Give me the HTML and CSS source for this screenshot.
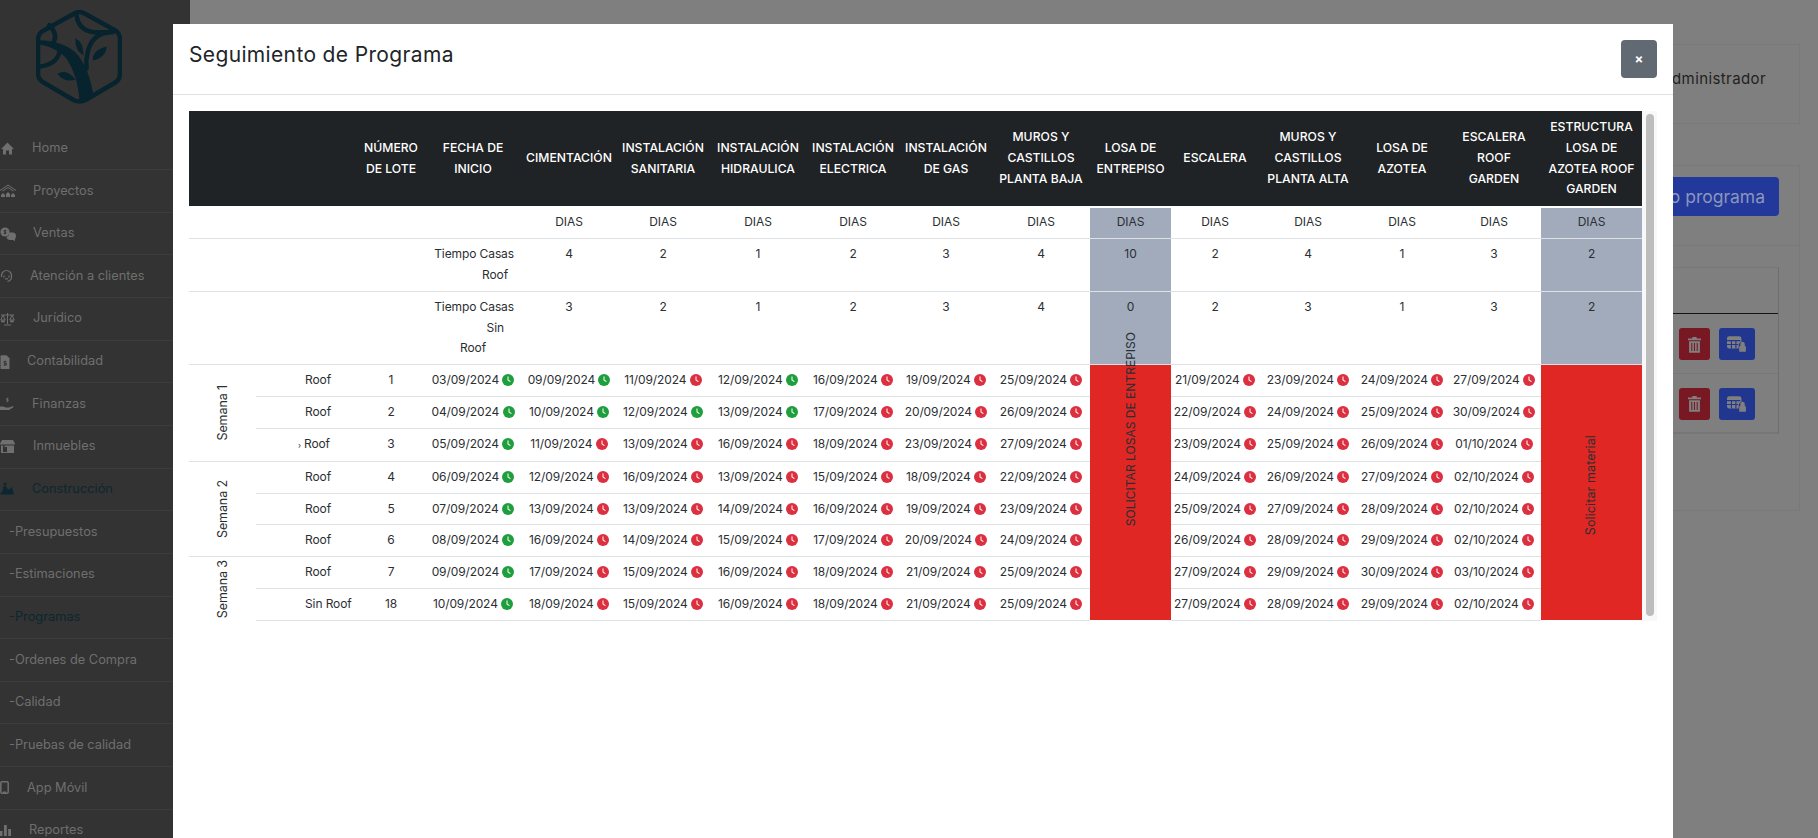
FILE: index.html
```html
<!DOCTYPE html>
<html lang="es">
<head>
  <meta charset="UTF-8">
  <title>Seguimiento de Programa</title>
  <link rel="stylesheet" href="styles.css">
</head>
<body>
  <svg class="sprite" width="0" height="0">
    <symbol id="clock" viewBox="0 0 12 12">
      <circle cx="6" cy="6" r="6" fill="currentColor"/>
      <path d="M5.5 2.5h1v3.2l2.2 1.500-.6.8-2.600-1.800z" fill="#fff"/>
    </symbol>
  </svg>

  <div class="layout">
    <aside class="sidebar">
      <div class="brand">
        <svg class="logo" viewBox="0 0 85 93" fill="none" stroke="#07232d" stroke-width="4.4" stroke-linecap="round">
          <path d="M37 4Q43 0 49 4L78 20Q83 23 83 29V63Q83 69 78 72L49 89Q43 92 37 89L8 72Q2 69 2 63V29Q2 23 8 20Z"/>
          <path d="M40 4Q41 20 58 22H76"/>
          <path d="M72 22Q55 24 51 42Q49 50 50 58"/>
          <path d="M13 15Q23 25 16 34"/>
          <path d="M23 42Q20 54 3 56"/>
          <path d="M43 90C42 74 38 60 30 48C24 41 14 36 3 34V30C16 30 30 34 39 42C49 52 54 68 57 85Z" fill="#07232d" stroke="none"/>
          <path d="M39 28Q47 32 47 45Q38 40 39 28Z" fill="#07232d" stroke="none"/>
          <path d="M70 36Q69 47 56 50Q56 39 70 36Z" fill="#07232d" stroke="none"/>
          <path d="M21 63Q31 58 39 69Q28 72 21 63Z" fill="#07232d" stroke="none"/>
        </svg>
      </div>
      <nav class="nav">
        <a class="nav-item">
          <span class="nav-icon"><svg width="15" height="15" viewBox="0 0 15 15"><path d="M7.5 1.5 14 8h-2v5.5H9V9.500H6v4H3V8H1z" fill="currentColor"/></svg></span>Home
        </a>
        <a class="nav-item">
          <span class="nav-icon wide"><svg width="16" height="14" viewBox="0 0 16 14"><path d="M0 6.500 8 1l8 5.500M2.500 7 8 3.500 13.500 7" fill="none" stroke="currentColor"/><path d="M1 13v-2l2-2 2 2v2zM6 13v-3l2-2 2 2v3zM11 13v-2l2-2 2 2v2z" fill="currentColor"/></svg></span>Proyectos
        </a>
        <a class="nav-item">
          <span class="nav-icon wide"><svg width="16" height="14" viewBox="0 0 16 14"><circle cx="5" cy="5" r="4.600" fill="currentColor"/><path d="M9 5.500h3.500q3.500 0 3.500 3.500 0 2-1 3v2l-2-1H10Q7 13 6.500 10 9.500 9 9 5.500z" fill="currentColor"/><path d="M6.500 3.500H4.200v1.500h1.600v1.500H3.500M5 2.500v5" fill="none" stroke="#333" stroke-width=".8"/></svg></span>Ventas
        </a>
        <a class="nav-item">
          <span class="nav-icon narrow"><svg width="13" height="14" viewBox="0 0 13 14" fill="none" stroke="currentColor" stroke-width="1.200"><path d="M1.500 8V6.500a5 5 0 0 1 10 0V8q0 3.500-4 4.500"/><path d="M4 6.500v2M9 6.500v2M5 9.500q1.500 1 3 0"/></svg></span>Atención a clientes
        </a>
        <a class="nav-item">
          <span class="nav-icon wide"><svg width="15" height="14" viewBox="0 0 15 14" fill="none" stroke="currentColor"><path d="M7.500 1v11M4 13h7M1 3h13M3 3 .8 8h4.400zM12 3 9.800 8h4.400z"/><path d="M.8 8.500a2.200 2 0 0 0 4.400 0zM9.800 8.500a2.200 2 0 0 0 4.400 0z" fill="currentColor" stroke="none"/></svg></span>Jurídico
        </a>
        <a class="nav-item">
          <span class="nav-icon small"><svg width="10" height="14" viewBox="0 0 10 14"><path d="M0 1q0-1 1-1h5l3 3v10q0 1-1 1H1q-1 0-1-1z" fill="currentColor" transform="translate(.5 .200)"/><path d="M6.500 6.500H4v1.800h2.500V10H3.500M5 5.500v5.500" fill="none" stroke="#333" stroke-width=".8"/></svg></span>Contabilidad
        </a>
        <a class="nav-item">
          <span class="nav-icon"><svg width="14" height="14" viewBox="0 0 14 14"><path d="M0 9.500h3l3 1h3l4-1.500q1 .5 0 1.500l-4 2.500H0z" fill="currentColor"/><path d="M8.500 1.500H6.800v1.300h1.400v1.400H6.300M7.300 .6v4.600" fill="none" stroke="currentColor" stroke-width=".8"/></svg></span>Finanzas
        </a>
        <a class="nav-item">
          <span class="nav-icon wide"><svg width="15" height="14" viewBox="0 0 15 14"><path d="M2 0h11l2 3.500v1H0v-1z" fill="currentColor"/><path d="M1 5.500h2V12h4V7h-2.500V5.500H14V13H1zM9.500 7H12v5H9.500z" fill="currentColor"/></svg></span>Inmuebles
        </a>
        <a class="nav-item active">
          <span class="nav-icon"><svg width="14" height="14" viewBox="0 0 14 14"><circle cx="5" cy="2" r="1.500" fill="currentColor"/><path d="M3 4.500 6 4l1.500 3H10l2-2 2 7.500H0l2-3.500L3 8.500z" fill="currentColor"/></svg></span>Construcción
        </a>
        <a class="nav-item sub">-Presupuestos</a>
        <a class="nav-item sub">-Estimaciones</a>
        <a class="nav-item sub active">-Programas</a>
        <a class="nav-item sub">-Ordenes de Compra</a>
        <a class="nav-item sub">-Calidad</a>
        <a class="nav-item sub">-Pruebas de calidad</a>
        <a class="nav-item">
          <span class="nav-icon small"><svg width="9" height="13" viewBox="0 0 9 13"><rect x=".8" y=".8" width="7.400" height="11.400" rx="1.200" fill="none" stroke="currentColor" stroke-width="1.500"/><rect x="3" y="10.500" width="3" height="1.500" fill="currentColor"/></svg></span>App Móvil
        </a>
        <a class="nav-item">
          <span class="nav-icon tight"><svg width="11" height="11" viewBox="0 0 11 11"><path d="M0 6h2.500v5H0zM4 0h2.800v11H4zM8.200 4H11v7H8.200z" fill="currentColor"/></svg></span>Reportes
        </a>
      </nav>
    </aside>

    <main class="content">
      <div class="card user-card">Administrador</div>
      <div class="card">
        <div class="card-header">
          <button class="btn-new">Nuevo programa</button>
        </div>
        <div class="card-body">
          <div class="list">
            <div class="list-head"></div>
            <div class="list-row">
              <button class="btn-icon red"><svg width="13" height="17" viewBox="0 0 12 15"><path d="M0 2h4V.5h4V2h4v1.500H0zM1 4.500h10V15H1z" fill="currentColor"/><path d="M3.500 6v7.500M6 6v7.500M8.500 6v7.500" stroke="#771822"/></svg></button>
              <button class="btn-icon blue"><svg width="20" height="16" viewBox="0 0 18 14"><path d="M0 2q0-2 2-2h9q2 0 2 2v3q-2 .5-2.500 3v3H2q-2 0-2-2z" fill="currentColor"/><path d="M0 4h12M0 7.500h10M4 4v7M8 4v7" stroke="#20368f"/><path d="M12 9V7a2 2 0 0 1 4 0v2h1v5h-6V9z" fill="currentColor"/></svg></button>
            </div>
            <div class="list-row">
              <button class="btn-icon red"><svg width="13" height="17" viewBox="0 0 12 15"><path d="M0 2h4V.5h4V2h4v1.500H0zM1 4.500h10V15H1z" fill="currentColor"/><path d="M3.500 6v7.500M6 6v7.500M8.500 6v7.500" stroke="#771822"/></svg></button>
              <button class="btn-icon blue"><svg width="20" height="16" viewBox="0 0 18 14"><path d="M0 2q0-2 2-2h9q2 0 2 2v3q-2 .5-2.500 3v3H2q-2 0-2-2z" fill="currentColor"/><path d="M0 4h12M0 7.500h10M4 4v7M8 4v7" stroke="#20368f"/><path d="M12 9V7a2 2 0 0 1 4 0v2h1v5h-6V9z" fill="currentColor"/></svg></button>
            </div>
          </div>
        </div>
      </div>
    </main>
  </div>

  <div class="modal">
    <div class="modal-header">
      <h5 class="modal-title">Seguimiento de Programa</h5>
      <button class="modal-close">×</button>
    </div>
    <div class="modal-body">
      <div class="table-wrap">
        <table class="program">
          <colgroup>
            <col class="w67"><col class="w102"><col class="w66"><col class="w98">
            <col class="w94"><col class="w94"><col class="w96"><col class="w94"><col class="w92"><col class="w98">
            <col class="w81"><col class="w88"><col class="w98"><col class="w90"><col class="w94"><col class="w101">
          </colgroup>
          <thead>
            <tr>
              <th></th><th></th>
              <th>NÚMERO<br>DE LOTE</th>
              <th>FECHA DE<br>INICIO</th>
              <th>CIMENTACIÓN</th>
              <th>INSTALACIÓN<br>SANITARIA</th>
              <th>INSTALACIÓN<br>HIDRAULICA</th>
              <th>INSTALACIÓN<br>ELECTRICA</th>
              <th>INSTALACIÓN<br>DE GAS</th>
              <th>MUROS Y<br>CASTILLOS<br>PLANTA BAJA</th>
              <th>LOSA DE<br>ENTREPISO</th>
              <th>ESCALERA</th>
              <th>MUROS Y<br>CASTILLOS<br>PLANTA ALTA</th>
              <th>LOSA DE<br>AZOTEA</th>
              <th>ESCALERA<br>ROOF<br>GARDEN</th>
              <th>ESTRUCTURA<br>LOSA DE<br>AZOTEA ROOF<br>GARDEN</th>
            </tr>
          </thead>
          <tbody>
            <tr class="dias">
              <td></td><td></td><td></td><td></td>
              <td>DIAS</td><td>DIAS</td><td>DIAS</td><td>DIAS</td><td>DIAS</td><td>DIAS</td>
              <td class="grey">DIAS</td>
              <td>DIAS</td><td>DIAS</td><td>DIAS</td><td>DIAS</td>
              <td class="grey">DIAS</td>
            </tr>
            <tr class="tiempo">
              <td></td><td></td><td></td>
              <td class="label"><span class="l1">Tiempo Casas</span><span class="l2">Roof</span></td>
              <td>4</td><td>2</td><td>1</td><td>2</td><td>3</td><td>4</td>
              <td class="grey">10</td>
              <td>2</td><td>4</td><td>1</td><td>3</td>
              <td class="grey">2</td>
            </tr>
            <tr class="tiempo">
              <td></td><td></td><td></td>
              <td class="label"><span class="l1">Tiempo Casas</span><span class="l3">Sin</span><span class="l4">Roof</span></td>
              <td>3</td><td>2</td><td>1</td><td>2</td><td>3</td><td>4</td>
              <td class="grey">0</td>
              <td>2</td><td>3</td><td>1</td><td>3</td>
              <td class="grey">2</td>
            </tr>
            <tr>
              <td class="week" rowspan="3"><span>Semana 1</span></td>
              <td class="type">Roof</td><td>1</td>
              <td>03/09/2024 <svg class="clock ok"><use href="#clock"/></svg></td>
              <td>09/09/2024 <svg class="clock ok"><use href="#clock"/></svg></td>
              <td>11/09/2024 <svg class="clock late"><use href="#clock"/></svg></td>
              <td>12/09/2024 <svg class="clock ok"><use href="#clock"/></svg></td>
              <td>16/09/2024 <svg class="clock late"><use href="#clock"/></svg></td>
              <td>19/09/2024 <svg class="clock late"><use href="#clock"/></svg></td>
              <td>25/09/2024 <svg class="clock late"><use href="#clock"/></svg></td>
              <td class="alert" rowspan="8"><span class="alert-losa">SOLICITAR LOSAS DE ENTREPISO</span></td>
              <td>21/09/2024 <svg class="clock late"><use href="#clock"/></svg></td>
              <td>23/09/2024 <svg class="clock late"><use href="#clock"/></svg></td>
              <td>24/09/2024 <svg class="clock late"><use href="#clock"/></svg></td>
              <td>27/09/2024 <svg class="clock late"><use href="#clock"/></svg></td>
              <td class="alert" rowspan="8"><span class="alert-material">Solicitar material</span></td>
            </tr>
            <tr>
              <td class="type">Roof</td><td>2</td>
              <td>04/09/2024 <svg class="clock ok"><use href="#clock"/></svg></td>
              <td>10/09/2024 <svg class="clock ok"><use href="#clock"/></svg></td>
              <td>12/09/2024 <svg class="clock ok"><use href="#clock"/></svg></td>
              <td>13/09/2024 <svg class="clock ok"><use href="#clock"/></svg></td>
              <td>17/09/2024 <svg class="clock late"><use href="#clock"/></svg></td>
              <td>20/09/2024 <svg class="clock late"><use href="#clock"/></svg></td>
              <td>26/09/2024 <svg class="clock late"><use href="#clock"/></svg></td>
              <td>22/09/2024 <svg class="clock late"><use href="#clock"/></svg></td>
              <td>24/09/2024 <svg class="clock late"><use href="#clock"/></svg></td>
              <td>25/09/2024 <svg class="clock late"><use href="#clock"/></svg></td>
              <td>30/09/2024 <svg class="clock late"><use href="#clock"/></svg></td>
            </tr>
            <tr>
              <td class="type"><span class="mark">›</span>Roof</td><td>3</td>
              <td>05/09/2024 <svg class="clock ok"><use href="#clock"/></svg></td>
              <td>11/09/2024 <svg class="clock late"><use href="#clock"/></svg></td>
              <td>13/09/2024 <svg class="clock late"><use href="#clock"/></svg></td>
              <td>16/09/2024 <svg class="clock late"><use href="#clock"/></svg></td>
              <td>18/09/2024 <svg class="clock late"><use href="#clock"/></svg></td>
              <td>23/09/2024 <svg class="clock late"><use href="#clock"/></svg></td>
              <td>27/09/2024 <svg class="clock late"><use href="#clock"/></svg></td>
              <td>23/09/2024 <svg class="clock late"><use href="#clock"/></svg></td>
              <td>25/09/2024 <svg class="clock late"><use href="#clock"/></svg></td>
              <td>26/09/2024 <svg class="clock late"><use href="#clock"/></svg></td>
              <td>01/10/2024 <svg class="clock late"><use href="#clock"/></svg></td>
            </tr>
            <tr>
              <td class="week" rowspan="3"><span>Semana 2</span></td>
              <td class="type">Roof</td><td>4</td>
              <td>06/09/2024 <svg class="clock ok"><use href="#clock"/></svg></td>
              <td>12/09/2024 <svg class="clock late"><use href="#clock"/></svg></td>
              <td>16/09/2024 <svg class="clock late"><use href="#clock"/></svg></td>
              <td>13/09/2024 <svg class="clock late"><use href="#clock"/></svg></td>
              <td>15/09/2024 <svg class="clock late"><use href="#clock"/></svg></td>
              <td>18/09/2024 <svg class="clock late"><use href="#clock"/></svg></td>
              <td>22/09/2024 <svg class="clock late"><use href="#clock"/></svg></td>
              <td>24/09/2024 <svg class="clock late"><use href="#clock"/></svg></td>
              <td>26/09/2024 <svg class="clock late"><use href="#clock"/></svg></td>
              <td>27/09/2024 <svg class="clock late"><use href="#clock"/></svg></td>
              <td>02/10/2024 <svg class="clock late"><use href="#clock"/></svg></td>
            </tr>
            <tr>
              <td class="type">Roof</td><td>5</td>
              <td>07/09/2024 <svg class="clock ok"><use href="#clock"/></svg></td>
              <td>13/09/2024 <svg class="clock late"><use href="#clock"/></svg></td>
              <td>13/09/2024 <svg class="clock late"><use href="#clock"/></svg></td>
              <td>14/09/2024 <svg class="clock late"><use href="#clock"/></svg></td>
              <td>16/09/2024 <svg class="clock late"><use href="#clock"/></svg></td>
              <td>19/09/2024 <svg class="clock late"><use href="#clock"/></svg></td>
              <td>23/09/2024 <svg class="clock late"><use href="#clock"/></svg></td>
              <td>25/09/2024 <svg class="clock late"><use href="#clock"/></svg></td>
              <td>27/09/2024 <svg class="clock late"><use href="#clock"/></svg></td>
              <td>28/09/2024 <svg class="clock late"><use href="#clock"/></svg></td>
              <td>02/10/2024 <svg class="clock late"><use href="#clock"/></svg></td>
            </tr>
            <tr>
              <td class="type">Roof</td><td>6</td>
              <td>08/09/2024 <svg class="clock ok"><use href="#clock"/></svg></td>
              <td>16/09/2024 <svg class="clock late"><use href="#clock"/></svg></td>
              <td>14/09/2024 <svg class="clock late"><use href="#clock"/></svg></td>
              <td>15/09/2024 <svg class="clock late"><use href="#clock"/></svg></td>
              <td>17/09/2024 <svg class="clock late"><use href="#clock"/></svg></td>
              <td>20/09/2024 <svg class="clock late"><use href="#clock"/></svg></td>
              <td>24/09/2024 <svg class="clock late"><use href="#clock"/></svg></td>
              <td>26/09/2024 <svg class="clock late"><use href="#clock"/></svg></td>
              <td>28/09/2024 <svg class="clock late"><use href="#clock"/></svg></td>
              <td>29/09/2024 <svg class="clock late"><use href="#clock"/></svg></td>
              <td>02/10/2024 <svg class="clock late"><use href="#clock"/></svg></td>
            </tr>
            <tr>
              <td class="week" rowspan="2"><span>Semana 3</span></td>
              <td class="type">Roof</td><td>7</td>
              <td>09/09/2024 <svg class="clock ok"><use href="#clock"/></svg></td>
              <td>17/09/2024 <svg class="clock late"><use href="#clock"/></svg></td>
              <td>15/09/2024 <svg class="clock late"><use href="#clock"/></svg></td>
              <td>16/09/2024 <svg class="clock late"><use href="#clock"/></svg></td>
              <td>18/09/2024 <svg class="clock late"><use href="#clock"/></svg></td>
              <td>21/09/2024 <svg class="clock late"><use href="#clock"/></svg></td>
              <td>25/09/2024 <svg class="clock late"><use href="#clock"/></svg></td>
              <td>27/09/2024 <svg class="clock late"><use href="#clock"/></svg></td>
              <td>29/09/2024 <svg class="clock late"><use href="#clock"/></svg></td>
              <td>30/09/2024 <svg class="clock late"><use href="#clock"/></svg></td>
              <td>03/10/2024 <svg class="clock late"><use href="#clock"/></svg></td>
            </tr>
            <tr>
              <td class="type">Sin Roof</td><td>18</td>
              <td>10/09/2024 <svg class="clock ok"><use href="#clock"/></svg></td>
              <td>18/09/2024 <svg class="clock late"><use href="#clock"/></svg></td>
              <td>15/09/2024 <svg class="clock late"><use href="#clock"/></svg></td>
              <td>16/09/2024 <svg class="clock late"><use href="#clock"/></svg></td>
              <td>18/09/2024 <svg class="clock late"><use href="#clock"/></svg></td>
              <td>21/09/2024 <svg class="clock late"><use href="#clock"/></svg></td>
              <td>25/09/2024 <svg class="clock late"><use href="#clock"/></svg></td>
              <td>27/09/2024 <svg class="clock late"><use href="#clock"/></svg></td>
              <td>28/09/2024 <svg class="clock late"><use href="#clock"/></svg></td>
              <td>29/09/2024 <svg class="clock late"><use href="#clock"/></svg></td>
              <td>02/10/2024 <svg class="clock late"><use href="#clock"/></svg></td>
            </tr>
          </tbody>
        </table>
        <div class="scroll-track"><div class="scroll-thumb"></div></div>
      </div>
    </div>
  </div>
</body>
</html>
```

FILE: styles.css
```css
* {
  box-sizing: border-box;
}
html, body {
  height: 100%;
}
body {
  margin: 0;
  overflow: hidden;
  background: #7f7f7f;
  font-family: Inter, "Open Sans", sans-serif;
  font-size: 13px;
  line-height: 20.8px;
  color: #2b2f33;
}
.sprite {
  position: absolute;
}
.layout {
  display: flex;
  height: 838px;
  overflow: hidden;
}

/* sidebar */
.sidebar {
  width: 190px;
  flex: none;
  background: #333;
  color: #6f6f6f;
}
.brand {
  height: 127.5px;
  padding: 10px 0 0 36px;
}
.logo {
  display: block;
  width: 86px;
  height: 94px;
}
.nav-item {
  display: flex;
  align-items: center;
  height: 42.65px;
  border-bottom: 1px solid #3c3c3c;
  font-size: 12.8px;
  white-space: nowrap;
}
.nav-item.active {
  color: #0b2730;
}
.nav-item.sub {
  padding-left: 9px;
}
.nav-icon {
  display: flex;
  width: 32px;
  flex: none;
}
.nav-icon.wide {
  width: 33px;
}
.nav-icon.narrow {
  width: 30px;
}
.nav-icon.small {
  width: 27px;
}
.nav-icon.tight {
  width: 29px;
}

/* page behind the modal */
.content {
  flex: 1;
  padding: 44px 18px 0 20px;
}
.card {
  border: 1px solid #797979;
  margin-bottom: 41px;
}
.user-card {
  height: 80px;
  padding: 24px 33px 0 0;
  text-align: right;
  font-size: 15px;
  letter-spacing: .4px;
  color: #1f1f1f;
}
.card-header {
  height: 80px;
  padding: 11px 20px 0 0;
  border-bottom: 1px solid #797979;
  text-align: right;
}
.btn-new {
  height: 39px;
  padding: 0 14px;
  border: none;
  border-radius: 4px;
  background: #22399b;
  color: #8a96bd;
  font: 17.5px Inter, sans-serif;
}
.card-body {
  height: 264px;
  padding: 21px 20px;
}
.list {
  border: 1px solid #777;
  border-right-color: #6e6e6e;
}
.list-head {
  height: 46px;
  border-bottom: 1px solid #141414;
}
.list-row {
  display: flex;
  justify-content: flex-end;
  gap: 9px;
  height: 59.5px;
  padding: 14px 23px 0 0;
  border-bottom: 1px solid #777;
}
.btn-icon {
  display: flex;
  align-items: center;
  justify-content: center;
  width: 31px;
  height: 32px;
  padding: 0;
  border: none;
  border-radius: 3px;
  color: #808080;
}
.btn-icon.red {
  background: #771822;
}
.btn-icon.blue {
  width: 36px;
  background: #20368f;
}

/* modal */
.modal {
  position: fixed;
  top: 24px;
  left: 173px;
  bottom: 0;
  width: 1500px;
  background: #fff;
}
.modal-header {
  display: flex;
  justify-content: space-between;
  height: 71px;
  padding: 16px;
  border-bottom: 1px solid #dee2e6;
}
.modal-title {
  margin: 0;
  font-size: 21px;
  font-weight: 400;
  line-height: 30px;
  letter-spacing: .35px;
  color: #212529;
}
.modal-close {
  width: 36px;
  height: 38px;
  padding: 0;
  border: none;
  border-radius: 4px;
  background: #616a72;
  color: #fff;
  font: bold 13px Inter, sans-serif;
}
.modal-body {
  padding: 16px;
}
.table-wrap {
  display: flex;
  align-items: stretch;
}

/* program table */
.program {
  width: 1453px;
  table-layout: fixed;
  border-collapse: collapse;
  text-align: center;
}
.w67 { width: 67px; }
.w66 { width: 66px; }
.w81 { width: 81px; }
.w88 { width: 88px; }
.w90 { width: 90px; }
.w92 { width: 92px; }
.w94 { width: 94px; }
.w96 { width: 96px; }
.w98 { width: 98px; }
.w101 { width: 101px; }
.w102 { width: 102px; }

.program th {
  padding: 6px 0 5.5px;
  background: #1f2326;
  color: #fff;
  font-size: 12.2px;
  font-weight: 500;
  white-space: nowrap;
}
.program td {
  padding: 5px 0;
  border-top: 1px solid #dee2e6;
  white-space: nowrap;
  font-size: 12px;
  letter-spacing: -.1px;
}
.program tbody tr:last-child td {
  border-bottom: 1px solid #dee2e6;
}
.dias td {
  border-top: none;
}
.program .dias td {
  padding: 6.5px 0 5px;
}
.program .dias td.grey {
  background: linear-gradient(#fff 2px, #a1abbb 2px);
}
.tiempo td {
  vertical-align: top;
}
.program .tiempo td {
  padding-bottom: 5.2px;
}
.label span {
  display: block;
}
.l1 {
  padding-right: 8px;
  text-align: right;
}
.l2 {
  padding-right: 14px;
  text-align: right;
}
.l3 {
  padding-right: 18px;
  text-align: right;
}
.program td.grey {
  background: #a1abbb;
}
.program td.alert {
  position: relative;
  background: #e02724;
}
.program td.week {
  padding: 0;
  font-size: 12.5px;
  line-height: 16px;
}
.week span {
  display: block;
  width: fit-content;
  margin: 0 auto;
  writing-mode: vertical-rl;
  transform: rotate(180deg);
}
.program td.type {
  padding-left: 49px;
  text-align: left;
}
.mark {
  margin-left: -7px;
  margin-right: 3px;
  font-size: 8px;
}
.clock {
  width: 12px;
  height: 12px;
  vertical-align: -2px;
}
.clock.ok {
  color: #1f9e3d;
}
.clock.late {
  color: #dc2f40;
}
.alert-losa {
  position: absolute;
  top: -33px;
  left: 50%;
  margin-left: -10px;
  writing-mode: vertical-rl;
  letter-spacing: .02px;
  transform: rotate(180deg);
}
.alert-material {
  display: inline-block;
  margin-bottom: 9px;
  font-size: 12.5px;
  letter-spacing: .1px;
  writing-mode: vertical-rl;
  transform: rotate(180deg);
}
.scroll-track {
  width: 15px;
  padding: 3px 3px 5px 4px;
  background: #f8f8f8;
}
.scroll-thumb {
  height: 100%;
  border-radius: 4px;
  background: #bdbdbd;
}
```
